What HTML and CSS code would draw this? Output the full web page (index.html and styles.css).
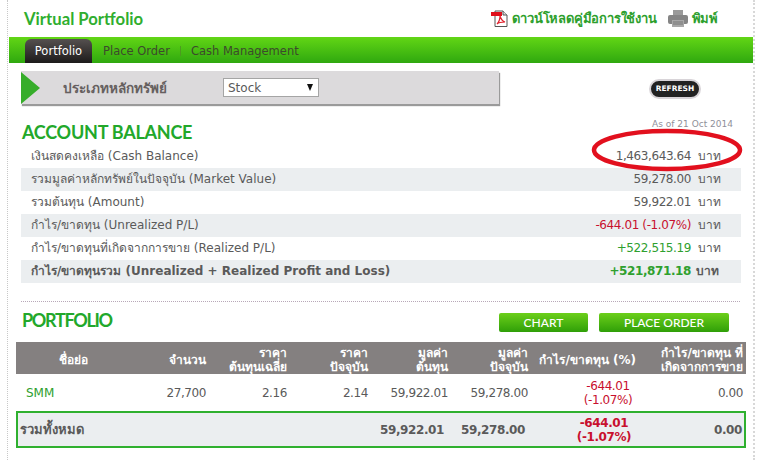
FILE: index.html
```html
<!DOCTYPE html>
<html>

<head>
    <meta charset="utf-8">
    <title>Virtual Portfolio</title>
    <link rel="stylesheet" href="styles.css">
</head>

<body>
    <div class="page">
        <div class="header">
            <div class="title">Virtual Portfolio</div>
            <div class="tools">
                <svg class="icon-pdf" width="17" height="17" viewBox="0 0 17 17">
                    <path d="M4 1h8l4 4v11.500H4z" fill="#fff" stroke="#555" stroke-width="1"/>
                    <path d="M12 1v4h4" fill="#ddd" stroke="#555" stroke-width="1"/>
                    <rect x="0" y="2" width="11" height="4" fill="#e0101c"/>
                    <path d="M6 14c2-2 3-5 3-8 1 3 2 5 5 6-3 0-6 0-8 2z" fill="none" stroke="#e0202c" stroke-width="1.200"/>
                </svg>
                <a class="tool-link" href="javascript:void(0)">ดาวน์โหลดคู่มือการใช้งาน</a>
                <svg class="icon-print" width="20" height="17" viewBox="0 0 20 17">
                    <rect x="5" y="0" width="10" height="6" fill="#9a9a9a"/>
                    <rect x="0" y="5" width="20" height="9" rx="2" fill="#858585"/>
                    <rect x="4" y="10" width="12" height="7" fill="#a8a8a8"/>
                    <path d="M5 12h10M5 14h10" stroke="#777" stroke-width="1"/>
                </svg>
                <a class="tool-link" href="javascript:void(0)">พิมพ์</a>
            </div>
        </div>
        <ul class="nav">
            <li class="current"><a href="javascript:void(0)">Portfolio</a></li>
            <li><a href="javascript:void(0)">Place Order</a></li>
            <li class="sep"></li>
            <li><a href="javascript:void(0)">Cash Management</a></li>
        </ul>
        <div class="filter-row">
            <div class="filter">
                <div class="arrow"></div>
                <span class="filter-label">ประเภทหลักทรัพย์</span>
                <div class="select">Stock<span class="caret"></span></div>
            </div>
            <a class="refresh" href="javascript:void(0)">REFRESH</a>
        </div>

        <div class="balance">
            <div class="head-row">
                <h2>ACCOUNT BALANCE</h2>
                <span class="as-of">As of 21 Oct 2014</span>
            </div>
            <div class="line"><span>เงินสดคงเหลือ (Cash Balance)</span><span class="val">1,463,643.64</span><span class="unit">บาท</span></div>
            <div class="line alt"><span>รวมมูลค่าหลักทรัพย์ในปัจจุบัน (Market Value)</span><span class="val">59,278.00</span><span class="unit">บาท</span></div>
            <div class="line"><span>รวมต้นทุน (Amount)</span><span class="val">59,922.01</span><span class="unit">บาท</span></div>
            <div class="line alt"><span>กำไร/ขาดทุน (Unrealized P/L)</span><span class="val red">-644.01 (-1.07%)</span><span class="unit">บาท</span></div>
            <div class="line"><span>กำไร/ขาดทุนที่เกิดจากการขาย (Realized P/L)</span><span class="val green">+522,515.19</span><span class="unit">บาท</span></div>
            <div class="line alt strong"><span>กำไร/ขาดทุนรวม (Unrealized + Realized Profit and Loss)</span><span class="val green">+521,871.18</span><span class="unit">บาท</span></div>
            <svg class="circle" width="154" height="46" viewBox="0 0 154 46">
                <ellipse cx="77" cy="23" rx="73" ry="19" fill="none" stroke="#e2101e" stroke-width="4.500"/>
            </svg>
        </div>

        <div class="portfolio">
            <div class="port-head">
                <h2 class="port-title">PORTFOLIO</h2>
                <div class="buttons">
                    <a class="btn btn-chart" href="javascript:void(0)">CHART</a>
                    <a class="btn btn-order" href="javascript:void(0)">PLACE ORDER</a>
                </div>
            </div>
            <div class="table">
                <div class="tr th">
                    <div class="name">ชื่อย่อ</div>
                    <div>จำนวน</div>
                    <div>ราคา<br>ต้นทุนเฉลี่ย</div>
                    <div>ราคา<br>ปัจจุบัน</div>
                    <div>มูลค่า<br>ต้นทุน</div>
                    <div>มูลค่า<br>ปัจจุบัน</div>
                    <div class="th-pct">กำไร/ขาดทุน (%)</div>
                    <div class="last">กำไร/ขาดทุน ที่<br>เกิดจากการขาย</div>
                </div>
                <div class="tr td">
                    <div class="name green">SMM</div>
                    <div>27,700</div>
                    <div>2.16</div>
                    <div>2.14</div>
                    <div>59,922.01</div>
                    <div>59,278.00</div>
                    <div class="pct red">-644.01<br>(-1.07%)</div>
                    <div class="last">0.00</div>
                </div>
                <div class="total">
                    <div class="total-name">รวมทั้งหมด</div>
                    <div>59,922.01</div>
                    <div>59,278.00</div>
                    <div class="pct red">-644.01<br>(-1.07%)</div>
                    <div>0.00</div>
                </div>
            </div>
        </div>
    </div>
</body>

</html>
```

FILE: styles.css
```css
*{
    padding: 0;
    margin: 0;
    box-sizing: border-box;
}
ul{
    list-style: none;
}
a{
    text-decoration: none;
    color: inherit;
}
html,body{
    width: 100%;
    height: 100%;
    overflow: hidden;
    background-color: #fff;
}
body{
    font-family: Tahoma, "DejaVu Sans", "Noto Sans", sans-serif;
    font-size: 12px;
    color: #5a5a5a;
}
.page{
    width: 748px;
    height: 460px;
    margin-left: 7px;
    padding-left: 1px;
    border-left: 1px dotted #c8c8c8;
    border-right: 2px dotted #d8d8d8;
}
.header{
    height: 37px;
    display: flex;
    justify-content: space-between;
    align-items: center;
    padding: 0 35px 0 15px;
}
.title{
    font-family: Lato, sans-serif;
    font-size: 16.700px;
    font-weight: 700;
    color: #2fae2f;
}
.tools{
    display: flex;
    align-items: center;
}
.tool-link{
    font-family: "Noto Sans", "DejaVu Sans", sans-serif;
    font-size: 13px;
    font-weight: 600;
    letter-spacing: -.2px;
    color: #2d9f2d;
}
.icon-pdf{
    margin-right: 4px;
}
.icon-print{
    margin: 0 4px 0 11px;
}
.nav{
    height: 26px;
    display: flex;
    align-items: flex-end;
    padding-left: 16px;
    background: linear-gradient(#62d615, #2fa80f);
}
.nav li{
    height: 24px;
    line-height: 25px;
    padding: 0 10px;
    font-size: 11.500px;
    color: #3c4a2c;
}
.nav li.current{
    width: 67px;
    margin-right: 1px;
    padding: 0;
    text-align: center;
    color: #fff;
    border-radius: 6px 6px 0 0;
    background: linear-gradient(#55504f, #1d1b1b);
}
.nav li.sep{
    width: 1px;
    height: 10px;
    margin: 0 0 7px;
    padding: 0;
    background-color: #4c9a20;
}
.filter-row{
    display: flex;
    align-items: flex-start;
    margin: 8px 0 0 12px;
}
.filter{
    width: 478px;
    height: 33px;
    display: flex;
    align-items: center;
    background-color: #dcdadc;
    box-shadow: 1px 2px 1px #9a9a9a;
}
.arrow{
    width: 0;
    height: 0;
    border-left: 19px solid #36ad2a;
    border-top: 16.500px solid transparent;
    border-bottom: 16.500px solid transparent;
}
.filter-label{
    width: 160px;
    margin-left: 23px;
    font-family: "Noto Sans", "DejaVu Sans", sans-serif;
    font-weight: 700;
    font-size: 13.500px;
    color: #66605f;
}
.select{
    width: 96px;
    height: 19px;
    line-height: 18px;
    padding-left: 4px;
    position: relative;
    background-color: #fff;
    border: 1px solid #a5a5a5;
}
.caret{
    position: absolute;
    right: 5px;
    top: 5px;
    border-left: 3.500px solid transparent;
    border-right: 3.500px solid transparent;
    border-top: 7px solid #111;
}
.refresh{
    width: 52px;
    height: 20px;
    margin: 8px 0 0 150px;
    border: 2px solid #d8d4d8;
    border-radius: 10px;
    background-color: #222;
    color: #fff;
    font-size: 7.500px;
    font-weight: 700;
    line-height: 16px;
    text-align: center;
}
h2{
    font-family: Lato, sans-serif;
    font-size: 18px;
    font-weight: 700;
    line-height: 18px;
    letter-spacing: -.25px;
    color: #22a82a;
}
.balance{
    width: 720px;
    margin: 21px 0 0 12px;
    position: relative;
}
.head-row{
    height: 20px;
    display: flex;
    justify-content: space-between;
}
.head-row h2{
    margin: -2px 0 0 1px;
}
.as-of{
    margin: -5px 8px 0 0;
    font-size: 9px;
    line-height: 9px;
    color: #8f8f9a;
}
.line{
    height: 23px;
    line-height: 22px;
    display: flex;
    padding-left: 10px;
}
.line.alt{
    background-color: #ebeef0;
}
.line.strong{
    font-weight: 700;
}
.val{
    margin-left: auto;
    letter-spacing: -.4px;
}
.unit{
    width: 50px;
    padding-left: 7px;
}
.line.strong .unit{
    padding-left: 5px;
}
.red{
    color: #c8102e;
}
.green{
    color: #2ea02e;
}
.circle{
    position: absolute;
    left: 569px;
    top: 2px;
}
.portfolio{
    margin: 18px 0 0 7px;
    width: 730px;
    position: relative;
}
.port-head{
    margin-left: 5px;
    width: 719px;
    padding: 11px 11px 0 0;
    height: 41px;
    display: flex;
    justify-content: space-between;
    border-top: 1px dotted #b8a8b8;
}
.port-title{
    margin: -2px 0 0 1px;
    letter-spacing: -1.300px;
}
.buttons{
    display: flex;
    gap: 11px;
}
.btn{
    height: 19px;
    line-height: 19px;
    text-align: center;
    color: #fff;
    font-family: Lato, sans-serif;
    font-size: 12px;
    font-weight: 500;
    background: linear-gradient(#6ccf1a, #2f9f08);
    border-radius: 2px;
}
.btn-chart{
    width: 89px;
}
.btn-order{
    width: 130px;
}
.tr{
    display: grid;
    grid-template-columns: 114px 78px 81px 81px 80px 80px 110px 106px;
    text-align: right;
}
.tr > div{
    padding-right: 2px;
}
.tr > .last{
    padding-right: 3px;
}
.th{
    height: 32px;
    padding-top: 3px;
    align-items: center;
    line-height: 14px;
    font-weight: 700;
    color: #fff;
    background-color: #848080;
}
.th .name{
    text-align: center;
    padding-right: 0;
}
.tr > .th-pct{
    padding-right: 4px;
    white-space: nowrap;
}
.td{
    height: 37px;
    align-items: center;
    line-height: 14px;
    letter-spacing: -.4px;
}
.td .name{
    text-align: left;
    padding-left: 10px;
    letter-spacing: 0;
}
.tr > .pct{
    padding: 0 4px 0 50px;
    text-align: center;
}
.total{
    height: 37px;
    padding-top: 1px;
    display: grid;
    grid-template-columns: 346px 80px 81px 108px 1fr;
    align-items: center;
    text-align: right;
    line-height: 14px;
    letter-spacing: -.4px;
    font-weight: 700;
    background-color: #ebeef0;
    border: 2px solid #2fb02f;
}
.total > .total-name{
    text-align: left;
    padding-left: 2px;
    font-size: 13px;
    letter-spacing: 0;
}
.total > .pct{
    padding-left: 50px;
    text-align: center;
}
.total > div:last-child{
    padding-right: 2px;
}
```
